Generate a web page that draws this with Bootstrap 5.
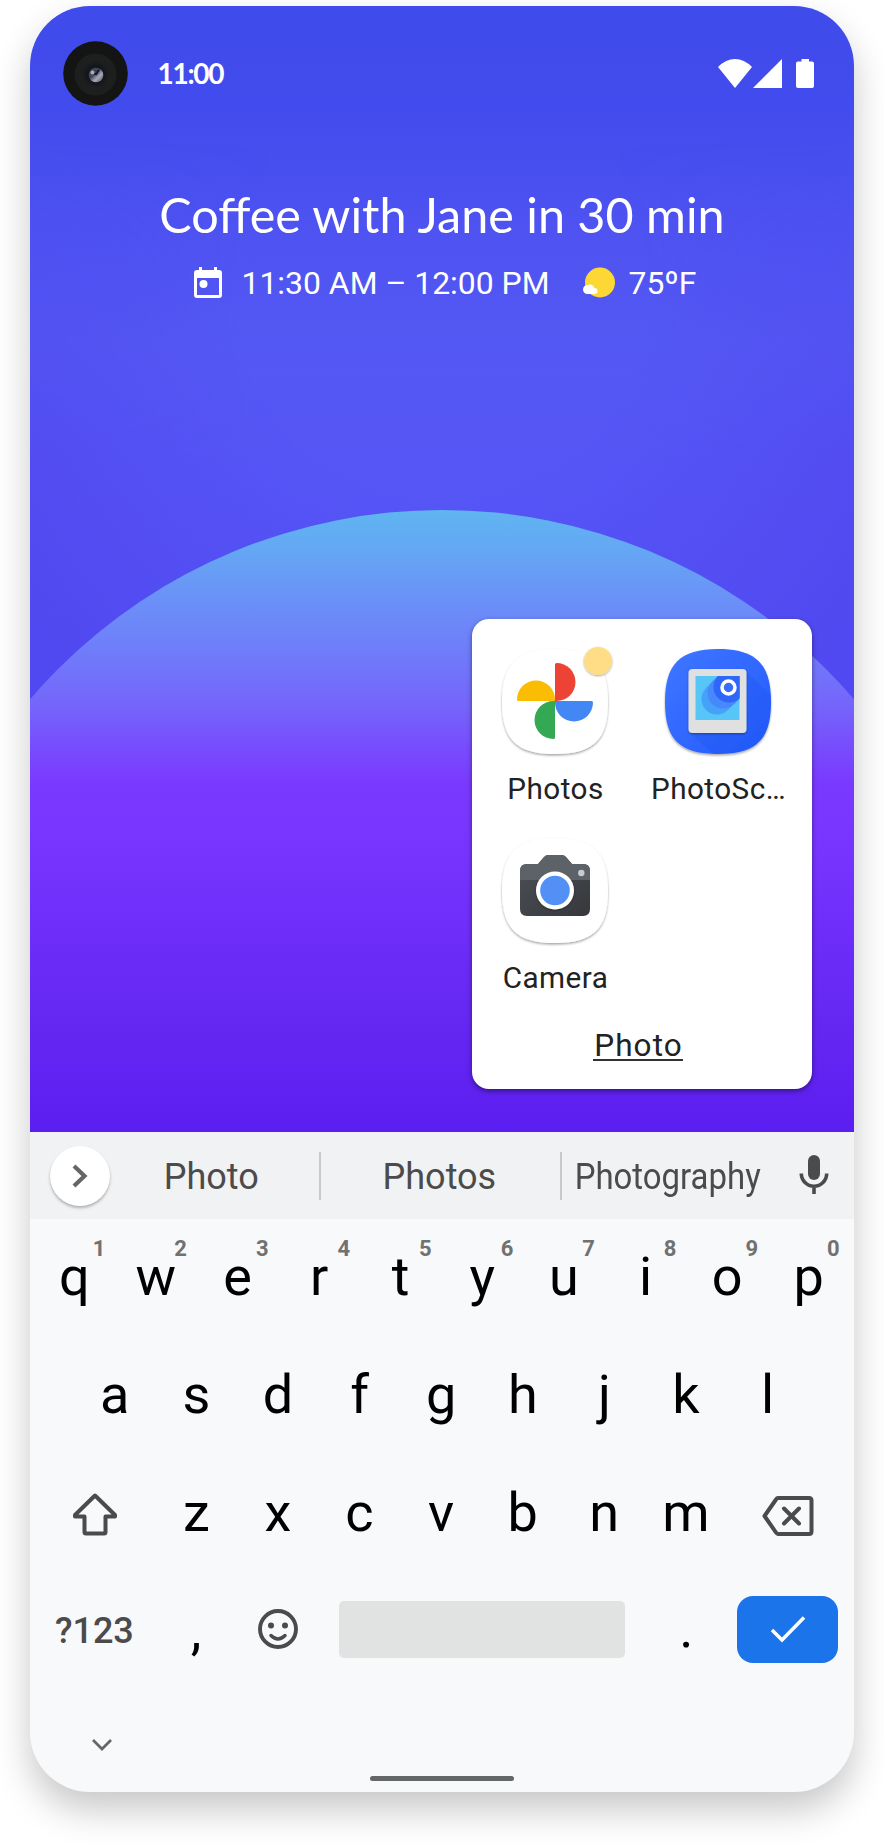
<!DOCTYPE html>
<html lang="en">
<head>
<meta charset="utf-8">
<meta name="viewport" content="width=device-width, initial-scale=1">
<title>Home screen</title>
<link href="https://cdn.jsdelivr.net/npm/bootstrap@5.3.0/dist/css/bootstrap.min.css" rel="stylesheet">
<style>
body{background:#fff;font-family:Roboto,"Liberation Sans",sans-serif;min-height:1846px;padding-top:6px}
.phone{width:824px;height:1786px;margin:0 30px;border-radius:60px;background:#f8f9fb;box-shadow:0 18px 36px rgba(0,0,0,.22)}
.home{height:1126px;border-radius:60px 60px 0 0;flex:none}
.wall{inset:0;width:100%;height:100%}
.statusbar{height:134px;padding:0 39px 0 32.5px}
.clock{font:700 28px/1 Lato,sans-serif;margin-left:30px;letter-spacing:-1.3px}
.event{font:400 48.5px/58px Lato,sans-serif;margin-top:45px;white-space:nowrap}
.glance{font-size:31.9px;line-height:40px;margin-top:20px;padding-left:163.500px;white-space:nowrap}
.glance svg{margin-top:-2px}
.folder{left:442px;top:613px;width:340px;height:470px;border-radius:17px;background:#fff;box-shadow:0 2px 5px rgba(0,0,0,.45);color:#222;padding:24px 2.5px 0 1.5px}
.app-cell{height:189px;width:163px}
.app-cell svg{display:block;overflow:visible}
.app-label{font-size:29.7px;line-height:36px;margin-top:11px;padding-left:1px;white-space:nowrap;letter-spacing:.45px}
.folder-name{font-size:31.5px;line-height:36px;margin-top:7px;padding-right:7px;letter-spacing:1.1px}
.folder-name span{border-bottom:2px solid #333;line-height:31px;display:inline-block;height:31px;padding-left:1px}
.suggest{height:87px;background:#f1f2f4;color:#4b4b4b;font-size:36px;flex:none}
.word{padding-top:2px}
.more{width:60px;height:60px;background:#fff;margin-left:20px;box-shadow:0 2px 3px rgba(0,0,0,.28)}
.rule{width:2.4px;height:48px;background:#c8c9cb;flex:none}
.cond{display:inline-block;transform:scaleX(.915)}
.krow{height:118px;line-height:118px;font-size:54px;color:#000}
.kkey{width:81.6px;text-align:center;position:relative;flex:none}
.hint{position:absolute;left:54.5px;top:20px;width:22px;font-size:22px;font-weight:700;line-height:22px;color:#707171}
.kwide{width:122px;flex:none}
.sym{font-size:36px;font-weight:500;color:#4b4b4b}
.space{width:286px;height:57px;border-radius:5px;background:#e1e3e2}
.enter{width:101px;height:67px;border-radius:16px;background:#1b74e9}
.pill{width:144px;height:4.5px;border-radius:3px;background:#636766}
</style>
</head>
<body>
<main class="phone d-flex flex-column">
  <section class="home position-relative overflow-hidden text-white">
    <svg class="wall position-absolute" viewBox="0 0 824 1126" preserveAspectRatio="none" aria-hidden="true">
      <defs>
        <linearGradient id="sky" x1="0" y1="0" x2="0" y2="1"><stop offset="0" stop-color="#404bec"/><stop offset=".085" stop-color="#424bed"/><stop offset=".19" stop-color="#4d52f1"/><stop offset=".3" stop-color="#5458f3"/><stop offset=".45" stop-color="#5655f6"/><stop offset="1" stop-color="#5655f6"/></linearGradient>
        <radialGradient id="edge" gradientUnits="userSpaceOnUse" cx="412" cy="290" r="520"><stop offset=".4" stop-color="#4f45ee" stop-opacity="0"/><stop offset="1" stop-color="#4f45ee" stop-opacity=".75"/></radialGradient>
        <linearGradient id="fade" x1="0" y1="0" x2="0" y2="1"><stop offset=".12" stop-color="#000"/><stop offset=".4" stop-color="#fff"/></linearGradient>
        <mask id="lower"><rect width="824" height="1126" fill="url(#fade)"/></mask>
        <linearGradient id="orb" gradientUnits="userSpaceOnUse" x1="0" y1="504" x2="0" y2="1126"><stop offset="0" stop-color="#5fb5f1"/><stop offset=".06" stop-color="#64a8f4"/><stop offset=".15" stop-color="#6b8ff8"/><stop offset=".24" stop-color="#7079fa"/><stop offset=".32" stop-color="#7563fb"/><stop offset=".385" stop-color="#784bfd"/><stop offset=".44" stop-color="#7a39ff"/><stop offset=".55" stop-color="#7734ff"/><stop offset=".68" stop-color="#6e2df9"/><stop offset=".83" stop-color="#6427f2"/><stop offset="1" stop-color="#5b1ef0"/></linearGradient>
      </defs>
      <rect width="824" height="1126" fill="url(#sky)"/>
      <rect width="824" height="1126" fill="url(#edge)" mask="url(#lower)"/>
      <circle cx="412" cy="1047" r="543" fill="url(#orb)"/>
    </svg>

    <header class="statusbar position-relative d-flex align-items-center">
      <svg width="65" height="65" viewBox="0 0 65 65" aria-hidden="true">
        <defs><radialGradient id="glass"><stop offset="0" stop-color="#0a0c16"/><stop offset=".65" stop-color="#14161c"/><stop offset="1" stop-color="#1c1d1d"/></radialGradient><linearGradient id="glint" x1="0" y1="0" x2="1" y2="1"><stop offset="0" stop-color="#4b5060"/><stop offset=".4" stop-color="#3d4256"/><stop offset=".65" stop-color="#a6aab8"/><stop offset="1" stop-color="#4c4f5a"/></linearGradient></defs>
        <circle cx="32.5" cy="32.5" r="32.3" fill="#141414"/><circle cx="32.5" cy="33.500" r="21" fill="#1d1e1e"/><circle cx="32.500" cy="33.500" r="13" fill="url(#glass)"/><circle cx="33" cy="34" r="7.300" fill="url(#glint)"/><path d="M28 30q3 5 6 4l3-5q-3-1-4 3" fill="#171a28"/><circle cx="29.500" cy="31.500" r="2" fill="#a9aeba"/>
      </svg>
      <span class="clock">11:00</span>
      <svg class="ms-auto" width="98" height="32" viewBox="0 0 98 32" fill="#fff" aria-label="Wi-Fi, signal, battery">
        <path d="M1 10Q9 2 18 2t17 8L18 31z"/><path d="M65 2v29H36z"/><path d="M84.500 2h7.500v2.500h3q2 0 2 2V29q0 2-2 2H81q-2 0-2-2V6.500q0-2 2-2h3.500z"/>
      </svg>
    </header>

    <div class="position-relative text-center">
      <div class="event">Coffee with Jane in 30 min</div>
      <div class="glance d-flex align-items-center">
        <svg width="28" height="31" viewBox="0 0 28 31" aria-hidden="true"><path fill="#fff" fill-rule="evenodd" d="M5 0h3v3h12V0h3v3h2q3 0 3 3v22q0 3-3 3H3q-3 0-3-3V6q0-3 3-3h2zM3 11v17h22V11z"/><circle cx="9.500" cy="17" r="4" fill="#fff"/></svg>
        <span style="margin-left:20px">11:30 AM – 12:00 PM</span>
        <svg style="margin-left:33px" width="33" height="31" viewBox="0 0 33 31" aria-hidden="true"><circle cx="17" cy="15.500" r="15" fill="#fdd835"/><path d="M4.500 27a4.500 4.500 0 0 1 0-9q5-2 7 3 3 0 3 3t-3 3z" fill="#fff"/></svg>
        <span style="margin-left:13px">75ºF</span>
      </div>
    </div>

    <div class="folder position-absolute">
      <div class="d-flex flex-wrap">
        <div class="app-cell d-flex flex-column align-items-center">
          <svg width="106" height="117" viewBox="0 0 106 117" aria-hidden="true">
            <defs><filter id="soft" x="-10%" y="-10%" width="120%" height="125%"><feDropShadow dx="0" dy="1.500" stdDeviation="1.100" flood-opacity=".36"/></filter><filter id="mini" x="-30%" y="-30%" width="160%" height="160%"><feDropShadow dx="0" dy="1" stdDeviation="1" flood-opacity=".35"/></filter></defs>
            <path filter="url(#soft)" d="M53 6C91 6 106 21 106 59S91 111 53 111 0 97 0 59 15 6 53 6z" fill="#fff"/>
            <path d="M53 21.500q0-1.500 1.500-1.500a19 19 0 0 1 0 38H53z" fill="#ec4335"/>
            <path d="M53 58H89.500q1.500 0 1.500 1.500a19 19 0 0 1-38 0z" fill="#4387f5"/>
            <path d="M53 58V94.500q0 1.500-1.500 1.500a19 19 0 0 1 0-38z" fill="#34a853"/>
            <path d="M53 58H16.500q-1.500 0-1.500-1.500a19 19 0 0 1 38 0z" fill="#fbbc04"/>
            <circle filter="url(#mini)" cx="96" cy="18" r="14" fill="#fedd86"/>
          </svg>
          <div class="app-label">Photos</div>
        </div>
        <div class="app-cell d-flex flex-column align-items-center">
          <svg width="106" height="117" viewBox="0 0 106 117" aria-hidden="true">
            <defs><linearGradient id="scan" x1="0" y1="0" x2="1" y2="1"><stop offset="0" stop-color="#3f76ff"/><stop offset="1" stop-color="#235aff"/></linearGradient><clipPath id="squircle"><path d="M53 6C91 6 106 21 106 59S91 111 53 111 0 97 0 59 15 6 53 6z"/></clipPath><clipPath id="photo"><path d="M30.500 33h44v44h-44z"/></clipPath></defs>
            <path filter="url(#soft)" d="M53 6C91 6 106 21 106 59S91 111 53 111 0 97 0 59 15 6 53 6z" fill="url(#scan)"/>
            <path clip-path="url(#squircle)" d="M80 27l60 60-40 70L25 90z" fill="#1c4fe0" opacity=".22"/>
            <rect filter="url(#mini)" x="23.500" y="26" width="58" height="64" rx="4" fill="#e0e0e0"/>
            <g clip-path="url(#photo)"><path d="M30 33h45v44H30z" fill="#58c5f8"/><circle cx="52" cy="56" r="15.500" fill="#45a2f8"/><path d="M41 45L53 33h22v22L63 67z" fill="#45a2f8"/><circle cx="58" cy="50" r="15.500" fill="#4788fc"/><path d="M47 39l8-8h22v22l-8 8z" fill="#4788fc"/><circle cx="64" cy="44" r="15.500" fill="#2f66fa"/></g>
            <circle cx="63.500" cy="44.500" r="6.500" fill="#3a6cf6" stroke="#fff" stroke-width="3.500"/>
          </svg>
          <div class="app-label">PhotoSc…</div>
        </div>
        <div class="app-cell d-flex flex-column align-items-center">
          <svg width="106" height="117" viewBox="0 0 106 117" aria-hidden="true">
            <defs><linearGradient id="body" x1="0" y1="0" x2="1" y2="1"><stop offset="0" stop-color="#4c5055"/><stop offset="1" stop-color="#36383c"/></linearGradient></defs>
            <path filter="url(#soft)" d="M53 6C91 6 106 21 106 59S91 111 53 111 0 97 0 59 15 6 53 6z" fill="#fff"/>
            <path d="M18 39q0-7 7-7h11l6-7q2-2 4-2h14q2 0 4 2l6 7h11q7 0 7 7v38q0 7-7 7H25q-7 0-7-7z" fill="url(#body)"/>
            <path d="M18 48v-9q0-7 7-7h11l6-7q2-2 4-2h14q2 0 4 2l6 7h11q7 0 7 7v9z" fill="#5c6268"/>
            <circle filter="url(#mini)" cx="53" cy="58.500" r="19" fill="#fff"/><circle cx="53" cy="58.500" r="14.800" fill="#5390f5"/><circle cx="79.300" cy="41" r="3.200" fill="#c9cbcd"/>
          </svg>
          <div class="app-label">Camera</div>
        </div>
      </div>
      <div class="folder-name text-center"><span>Photo</span></div>
    </div>
  </section>

  <section class="suggest d-flex align-items-center">
    <div class="more rounded-circle d-flex align-items-center justify-content-center"><svg width="18" height="26" viewBox="0 0 18 26" fill="none" stroke="#666" stroke-width="4.200" aria-hidden="true"><path d="M3 3l10.500 10L3 23"/></svg></div>
    <div class="word text-center" style="width:208.500px;padding-right:6px">Photo</div>
    <div class="rule"></div>
    <div class="word text-center" style="width:239px;padding-right:2px">Photos</div>
    <div class="rule"></div>
    <div class="word text-center" style="width:237px;padding-right:26px"><span class="cond">Photography</span></div>
    <svg class="flex-shrink-0" style="margin-top:-2px" width="30" height="40" viewBox="0 0 30 40" aria-hidden="true"><rect x="9" y="0" width="12" height="25" rx="6" fill="#4b4b4b"/><path d="M2.300 18.500a12.700 12.700 0 0 0 25.400 0M15 31v8" fill="none" stroke="#4b4b4b" stroke-width="3.600"/></svg>
  </section>

  <section class="keyboard d-flex flex-column">
    <div class="krow d-flex" style="margin-top:-1px;padding-left:3.500px">
      <div class="kkey">q<span class="hint">1</span></div><div class="kkey">w<span class="hint">2</span></div><div class="kkey">e<span class="hint">3</span></div><div class="kkey">r<span class="hint">4</span></div><div class="kkey">t<span class="hint">5</span></div><div class="kkey">y<span class="hint">6</span></div><div class="kkey">u<span class="hint">7</span></div><div class="kkey">i<span class="hint">8</span></div><div class="kkey">o<span class="hint">9</span></div><div class="kkey">p<span class="hint">0</span></div>
    </div>
    <div class="krow d-flex" style="padding-left:44px">
      <div class="kkey">a</div><div class="kkey">s</div><div class="kkey">d</div><div class="kkey">f</div><div class="kkey">g</div><div class="kkey">h</div><div class="kkey">j</div><div class="kkey">k</div><div class="kkey">l</div>
    </div>
    <div class="krow d-flex" style="padding-left:3.500px">
      <div class="kwide d-flex align-items-center justify-content-center"><svg style="margin-top:2px" width="46" height="44" viewBox="0 0 46 44" fill="none" stroke="#4b4b4b" stroke-width="4" stroke-linejoin="round" aria-hidden="true"><path d="M23 3.500L3 23v1.500h9.500V40q0 1.500 1.500 1.500h18q1.500 0 1.500-1.500V24.500H43V23z"/></svg></div>
      <div class="kkey">z</div><div class="kkey">x</div><div class="kkey">c</div><div class="kkey">v</div><div class="kkey">b</div><div class="kkey">n</div><div class="kkey">m</div>
      <div class="kwide d-flex align-items-center justify-content-center"><svg style="margin-top:6px" width="52" height="42" viewBox="0 0 52 42" fill="none" stroke="#4b4b4b" stroke-width="4" stroke-linecap="round" stroke-linejoin="round" aria-hidden="true"><path d="M16 3h31q2.500 0 2.500 2.500v31q0 2.500-2.500 2.500H16q-1 0-2-1.500L2.500 21 14 4.500Q15 3 16 3z"/><path d="M22 13.500l15 15M37 13.500l-15 15"/></svg></div>
    </div>
    <div class="krow d-flex align-items-center" style="padding-left:3.400px;height:114px">
      <div class="kwide sym text-center pt-1">?123</div>
      <div class="kkey pt-1">,</div>
      <div class="kkey d-flex justify-content-center"><svg width="40" height="40" viewBox="0 0 40 40" fill="none" stroke="#4b4b4b" stroke-width="3.900" stroke-linecap="round" aria-hidden="true"><circle cx="20" cy="20" r="18"/><path d="M13 26.500q7 7 14 0" stroke-width="3.500"/><circle cx="13" cy="16.500" r="3" fill="#4b4b4b" stroke="none"/><circle cx="27" cy="16.500" r="3" fill="#4b4b4b" stroke="none"/></svg></div>
      <div class="space" style="margin-left:20.500px"></div>
      <div class="kkey" style="margin:0 10px 0 20.500px">.</div>
      <div class="enter d-flex align-items-center justify-content-center"><svg width="36" height="28" viewBox="0 0 36 28" fill="none" stroke="#fff" stroke-width="3.500" aria-hidden="true"><path d="M2 15l10 10L34 2.500"/></svg></div>
    </div>
    <div style="padding:52px 0 0 61px;height:76px"><svg class="d-block" width="22" height="14" viewBox="0 0 22 14" fill="none" stroke="#666" stroke-width="2.800" aria-hidden="true"><path d="M2 2l9 9 9-9"/></svg></div>
    <div class="pill mx-auto" style="margin-top:14px"></div>
  </section>
</main>
<script src="https://cdn.jsdelivr.net/npm/bootstrap@5.3.0/dist/js/bootstrap.bundle.min.js"></script>
</body>
</html>
